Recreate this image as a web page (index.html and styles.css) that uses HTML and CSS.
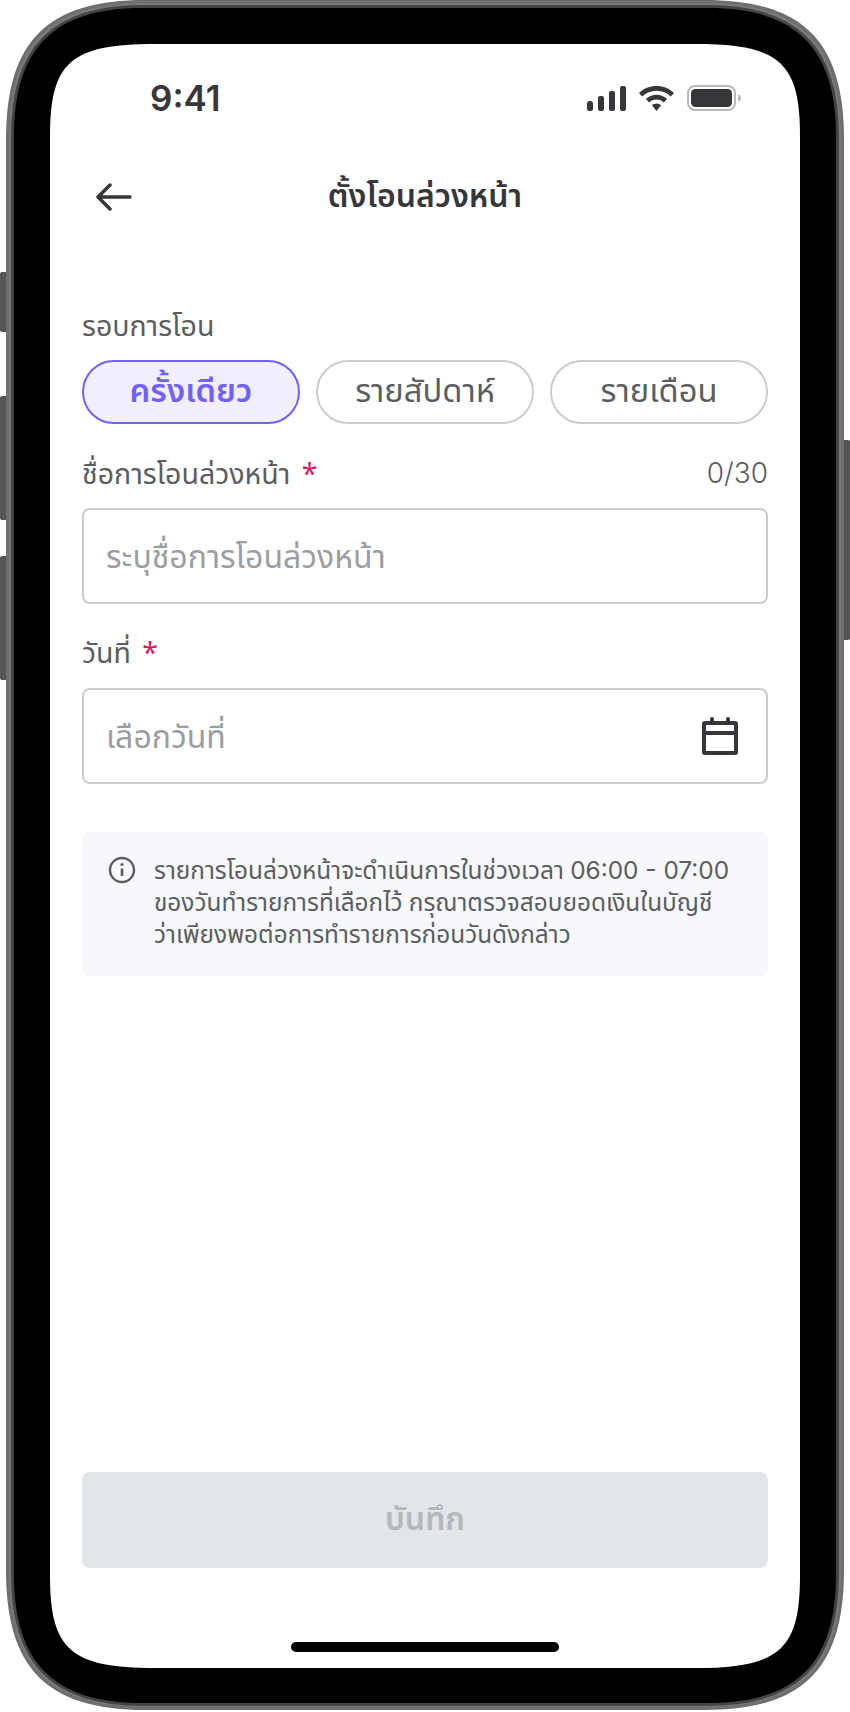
FILE: index.html
```html
<!DOCTYPE html>
<html lang="th">
<head>
  <meta charset="UTF-8">
  <meta name="viewport" content="width=device-width, initial-scale=1.0">
  <title>ตั้งโอนล่วงหน้า</title>
  <link rel="stylesheet" href="styles.css">
</head>
<body>
  <div class="device">
    <!-- Phone body, drawn behind the screen content -->
    <svg class="frame" width="850" height="1712" viewBox="0 0 850 1712">
      <rect x="0" y="272" width="8" height="60" rx="2" fill="#555"/>
      <rect x="0" y="396" width="8" height="124" rx="2" fill="#555"/>
      <rect x="0" y="556" width="8" height="124" rx="2" fill="#555"/>
      <rect x="842" y="440" width="8" height="200" rx="2" fill="#555"/>
      <path fill="#6e6e6e" d="M146 0H704C803 0 844 41 844 140V1570C844 1669 803 1710 704 1710H146C47 1710 6 1669 6 1570V140C6 41 47 0 146 0Z"/>
      <path fill="#797979" d="M145 3H705C801 3 841 43 841 139V1571C841 1667 801 1707 705 1707H145C49 1707 9 1667 9 1571V139C9 43 49 3 145 3Z"/>
      <path fill="#000" stroke="#444" stroke-width="6" paint-order="stroke" d="M142 8H708C796 8 836 48 836 136V1575C836 1663 796 1703 708 1703H142C54 1703 14 1663 14 1575V136C14 48 54 8 142 8Z"/>
      <path fill="#fff" d="M155 44H695C779 44 800 62 800 136V1576C800 1650 779 1668 695 1668H155C71 1668 50 1650 50 1576V136C50 62 71 44 155 44Z"/>
    </svg>

    <div class="screen">
      <div class="status-bar">
        <span class="time">9:41</span>
        <div class="status-icons">
          <svg width="39" height="25" viewBox="0 0 39 25" fill="#36373a">
            <rect x="0" y="15" width="6" height="10" rx="2.5"/>
            <rect x="11" y="10" width="6" height="15" rx="2"/>
            <rect x="22" y="5" width="6" height="20" rx="2"/>
            <rect x="33" y="0" width="6" height="25" rx="2"/>
          </svg>
          <svg width="35" height="25" viewBox="0 0 35 25" fill="#36373a">
            <path d="M17.500 0C24.300 0 30.400 2.600 35 7L31.800 10.400C28 6.900 23 4.800 17.500 4.800S7 6.900 3.200 10.400L0 7C4.600 2.600 10.700 0 17.500 0Z"/>
            <path d="M17.500 8.800C21.600 8.800 25.300 10.400 28.100 13L24.800 16.400C22.900 14.700 20.300 13.600 17.500 13.600S12.100 14.700 10.200 16.400L6.900 13C9.700 10.400 13.400 8.800 17.500 8.800Z"/>
            <path d="M17.500 17.500C19.300 17.500 20.900 18.200 22.100 19.300L17.500 25L12.900 19.300C14.100 18.200 15.700 17.500 17.500 17.500Z"/>
          </svg>
          <svg width="55" height="26" viewBox="0 0 55 26">
            <rect x="1" y="1" width="47" height="24" rx="7" fill="none" stroke="#b9b9ba" stroke-width="2"/>
            <rect x="4" y="4" width="41" height="18" rx="4.500" fill="#36373a"/>
            <path d="M51 9.500C53 10 54 11.300 54 13S53 16 51 16.500Z" fill="#b9b9ba"/>
          </svg>
        </div>
      </div>

      <div class="nav-bar">
        <svg class="back-icon" width="36" height="28" viewBox="0 0 36 28" fill="none" stroke="#36373a" stroke-width="3.500" stroke-linecap="round" stroke-linejoin="round">
          <path d="M34 14H2.500M14 2L2 14L14 26"/>
        </svg>
        <h1 class="nav-title">ตั้งโอนล่วงหน้า</h1>
      </div>

      <div class="form">
        <div class="field-label first-label">รอบการโอน</div>
        <div class="chips">
          <button class="chip chip-active">ครั้งเดียว</button>
          <button class="chip">รายสัปดาห์</button>
          <button class="chip">รายเดือน</button>
        </div>

        <div class="label-row">
          <span class="field-label">ชื่อการโอนล่วงหน้า <span class="required">*</span></span>
          <span class="counter">0/30</span>
        </div>
        <div class="input-box">
          <span class="placeholder">ระบุชื่อการโอนล่วงหน้า</span>
        </div>

        <div class="label-row date-label">
          <span class="field-label">วันที่ <span class="required">*</span></span>
        </div>
        <div class="input-box">
          <span class="placeholder">เลือกวันที่</span>
          <svg width="36" height="38" viewBox="0 0 36 38" fill="none" stroke="#36373a" stroke-width="4">
            <rect x="2" y="6" width="32" height="30" rx="1"/>
            <path d="M2 16H34"/>
            <path d="M10 2V6M26 2V6" stroke-linecap="round"/>
          </svg>
        </div>

        <div class="info-box">
          <svg class="info-icon" width="28" height="28" viewBox="0 0 28 28" fill="none" stroke="#5b5d60" stroke-width="2.400">
            <circle cx="14" cy="14" r="12"/>
            <path d="M14 12.500V20" stroke-width="2.600"/>
            <circle cx="14" cy="8.500" r="1.600" fill="#5b5d60" stroke="none"/>
          </svg>
          <p class="info-text">รายการโอนล่วงหน้าจะดำเนินการในช่วงเวลา <span class="digits">06:00 - 07:00</span><br>ของวันทำรายการที่เลือกไว้ กรุณาตรวจสอบยอดเงินในบัญชี<br>ว่าเพียงพอต่อการทำรายการก่อนวันดังกล่าว</p>
        </div>

        <button class="save-button">บันทึก</button>
      </div>

      <div class="home-indicator"></div>
    </div>
  </div>
</body>
</html>
```

FILE: styles.css
```css
/* Page and phone frame */
body {
  margin: 0;
  background: #fff;
  font-family: "Noto Sans", "Noto Sans Thai", Inter, sans-serif;
  color: #36373a;
}
.device {
  position: relative;
  width: 850px;
  height: 1712px;
  padding: 44px 50px;
  box-sizing: border-box;
}
.frame {
  position: absolute;
  top: 0;
  left: 0;
}
.screen {
  position: relative;
  display: flex;
  flex-direction: column;
  height: 1624px;
}

/* Status bar */
.status-bar {
  display: flex;
  justify-content: space-between;
  align-items: center;
  height: 108px;
  padding: 0 58px 0 100px;
}
.time {
  font-family: Inter, sans-serif;
  font-size: 35px;
  font-weight: 600;
}
.status-icons {
  display: flex;
  align-items: center;
  gap: 13px;
}

/* Navigation */
.nav-bar {
  position: relative;
  display: flex;
  justify-content: center;
  align-items: center;
  height: 90px;
}
.back-icon {
  position: absolute;
  left: 46px;
  top: 31px;
}
.nav-title {
  margin: 0;
  font-size: 32px;
  font-weight: 600;
}

/* Form */
.form {
  display: flex;
  flex: 1;
  flex-direction: column;
  padding: 0 32px;
}
.first-label {
  margin-top: 63px;
  margin-bottom: 2px;
}
.field-label {
  font-size: 28.500px;
  line-height: 40px;
  color: #5b5d60;
}
.required {
  margin-left: 4px;
  color: #e0195f;
}
.chips {
  display: grid;
  grid-template-columns: repeat(3, 1fr);
  gap: 16px;
  margin-top: 13px;
}
.chip {
  height: 64px;
  padding: 0;
  border: 2px solid #c9cdd0;
  border-radius: 32px;
  background: #fff;
  font-family: inherit;
  font-size: 32.700px;
  color: #5b5d60;
}
.chip-active {
  border-color: #7261f5;
  background: #f1effe;
  color: #7261f5;
  font-weight: 600;
}
.label-row {
  display: flex;
  justify-content: space-between;
  align-items: center;
  margin-top: 29px;
  margin-bottom: 15px;
}
.date-label {
  margin-top: 28px;
  margin-bottom: 16px;
}
.counter {
  font-family: Inter, sans-serif;
  font-size: 28px;
  font-weight: 300;
  color: #5b5d60;
}
.input-box {
  display: flex;
  justify-content: space-between;
  align-items: center;
  box-sizing: border-box;
  height: 96px;
  padding: 0 28px 0 22px;
  border: 2px solid #c9cdd0;
  border-radius: 8px;
}
.placeholder {
  padding-top: 3px;
  font-size: 32px;
  color: #9a9ea2;
}
.info-box {
  display: flex;
  gap: 18px;
  height: 144px;
  box-sizing: border-box;
  margin-top: 48px;
  padding: 22px 26px;
  border-radius: 8px;
  background: #f7f8fc;
}
.info-icon {
  flex-shrink: 0;
  margin-top: 2px;
}
.info-text {
  margin: 0;
  font-size: 24.400px;
  line-height: 32px;
  white-space: nowrap;
  color: #5b5d60;
}
.digits {
  font-family: Inter, sans-serif;
}
.save-button {
  height: 96px;
  margin-top: auto;
  border: none;
  border-radius: 8px;
  background: #e2e6ea;
  font-family: inherit;
  font-size: 32px;
  font-weight: 600;
  color: #b3b8bb;
}

/* Home indicator */
.home-indicator {
  width: 268px;
  height: 10px;
  margin: 74px auto 16px;
  border-radius: 5px;
  background: #000;
}
```
